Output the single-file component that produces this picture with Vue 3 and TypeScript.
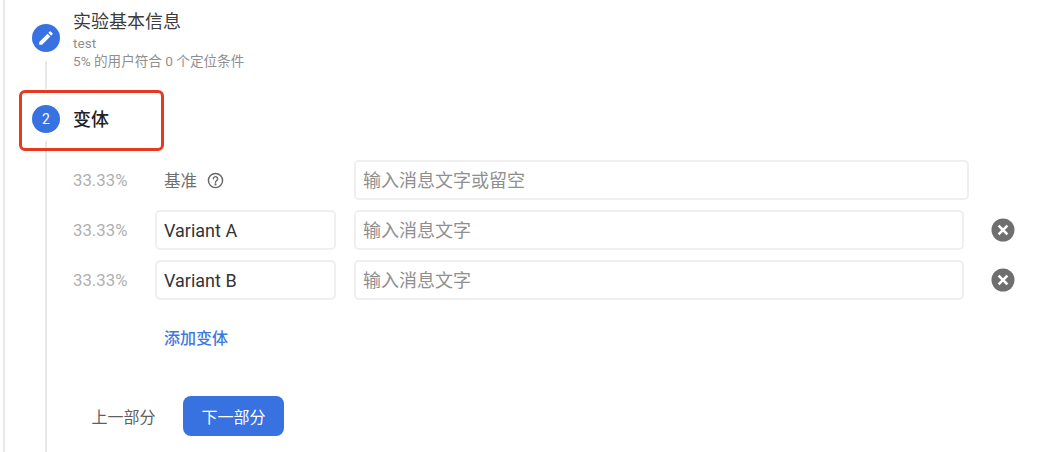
<script setup lang="ts">
interface Variant { pct: string; name: string; placeholder: string }
const variants: Variant[] = [
  { pct: '33.33%', name: 'Variant A', placeholder: '输入消息文字' },
  { pct: '33.33%', name: 'Variant B', placeholder: '输入消息文字' },
]
</script>

<template>
  <div class="page">
    <section class="step step-one">
      <div class="rail">
        <span class="circle">
          <svg viewBox="0 0 24 24" width="18" height="18" fill="#fff"><path d="M3 17.25V21h3.75L17.81 9.94l-3.75-3.75L3 17.25zM20.71 7.04a1 1 0 0 0 0-1.41l-2.34-2.34a1 1 0 0 0-1.41 0l-1.83 1.83 3.75 3.75 1.83-1.83z"/></svg>
        </span>
        <span class="line"></span>
      </div>
      <div class="summary">
        <h2 class="title">实验基本信息</h2>
        <p class="sub">test</p>
        <p class="sub">5% 的用户符合 0 个定位条件</p>
      </div>
    </section>

    <section class="step step-two">
      <div class="rail">
        <span class="circle num">2</span>
        <span class="line long"></span>
      </div>
      <div class="body">
        <h2 class="title strong">变体</h2>
        <div class="rows">
          <div class="row">
            <span class="pct">33.33%</span>
            <span class="base">基准
              <svg viewBox="0 0 24 24" width="17" height="17" fill="none" stroke="#666" stroke-width="2" stroke-linecap="round"><circle cx="12" cy="12" r="10"/><path d="M9 9.6a3 3 0 1 1 4.8 2.4c-1.1.8-1.8 1.3-1.8 2.6"/><circle cx="12" cy="17.6" r=".6" fill="#666"/></svg>
            </span>
            <input class="field msg wide" placeholder="输入消息文字或留空" />
          </div>
          <div v-for="v in variants" :key="v.name" class="row">
            <span class="pct">{{ v.pct }}</span>
            <input class="field name" :value="v.name" />
            <input class="field msg" :placeholder="v.placeholder" />
            <span class="remove">
              <svg viewBox="0 0 24 24" width="24" height="24"><circle cx="12" cy="12" r="11.5" fill="#6f6f6f"/><path d="M7.6 7.6l8.8 8.8M16.4 7.6l-8.8 8.8" stroke="#fff" stroke-width="2.6" fill="none"/></svg>
            </span>
          </div>
        </div>
        <a class="add">添加变体</a>
        <div class="actions">
          <button class="btn ghost">上一部分</button>
          <button class="btn primary">下一部分</button>
        </div>
      </div>
    </section>
    <div class="highlight"></div>
  </div>
</template>

<style>
html, body { margin: 0; background: #fff; }
</style>

<style scoped>
.page {
  position: relative;
  width: 1057px;
  height: 452px;
  margin-left: 3px;
  box-sizing: border-box;
  border-left: 2px solid #e9e9e9;
  overflow: hidden;
  background: #fff;
  font-family: Roboto, "Noto Sans CJK SC", sans-serif;
  color: #3a3a3a;
}
.step { display: flex; gap: 13px; padding-left: 27px; }
.step-one { height: 90px; }
.rail { display: flex; flex-direction: column; align-items: center; width: 28px; flex: none; }
.step-one .rail { padding-top: 24px; }
.step-two .rail { padding-top: 15px; }
.circle {
  width: 28px; height: 28px; border-radius: 50%;
  background: #3871e0; color: #fff;
  display: flex; align-items: center; justify-content: center; flex: none;
}
.num { font-size: 14px; }
.line { width: 2px; background: #e8e8e8; height: 28px; margin-top: 9px; }
.line.long { height: 320px; margin-top: 8px; }
.summary { padding-top: 10px; }
.title { margin: 0; font-size: 18px; line-height: 24px; font-weight: 400; color: #3c3c3c; }
.title.strong { font-weight: 500; color: #222; line-height: 28px; margin-top: 16px; }
.sub { margin: 0; font-size: 13.6px; line-height: 18px; color: #8f8f8f; }
.sub:first-of-type { margin-top: 0; }
.body { flex: 1; min-width: 0; }
.rows { margin-top: 26px; display: flex; flex-direction: column; gap: 10px; }
.row { display: flex; align-items: center; height: 40px; }
.pct { width: 82px; flex: none; font-size: 16.8px; color: #b0b0b0; }
.base {
  width: 199px; flex: none; padding-left: 9px; box-sizing: border-box;
  font-size: 16.5px; color: #6e6e6e; display: flex; align-items: center; gap: 10px;
}
.field {
  height: 40px; box-sizing: border-box; border: 2px solid #efefef; border-radius: 5px;
  padding: 0 7px; font: inherit; font-size: 18px; color: #333; outline: none; background: #fff;
}
.field::placeholder { color: #8f8f8f; opacity: 1; }
.name { width: 181px; flex: none; margin-right: 18px; }
.msg { width: 610px; flex: none; }
.msg.wide { width: 615px; }
.remove { width: 24px; height: 24px; margin-left: 27px; display: flex; }
.add { display: block; margin: 29px 0 0 91px; font-size: 16px; line-height: 20px; font-weight: 500; color: #3f78db; }
.actions { display: flex; align-items: center; gap: 9px; margin-top: 47px; margin-left: 0; }
.btn {
  height: 40px; border: none; border-radius: 8px; font: inherit; font-size: 16px;
}
.ghost { width: 101px; background: transparent; color: #5f5f5f; }
.primary { width: 101px; background: #3871e0; color: #fff; }
.highlight {
  position: absolute; left: 14px; top: 90px; width: 145px; height: 61px;
  box-sizing: border-box; border: 3px solid #e6391f; border-radius: 6px;
  pointer-events: none;
}
</style>
